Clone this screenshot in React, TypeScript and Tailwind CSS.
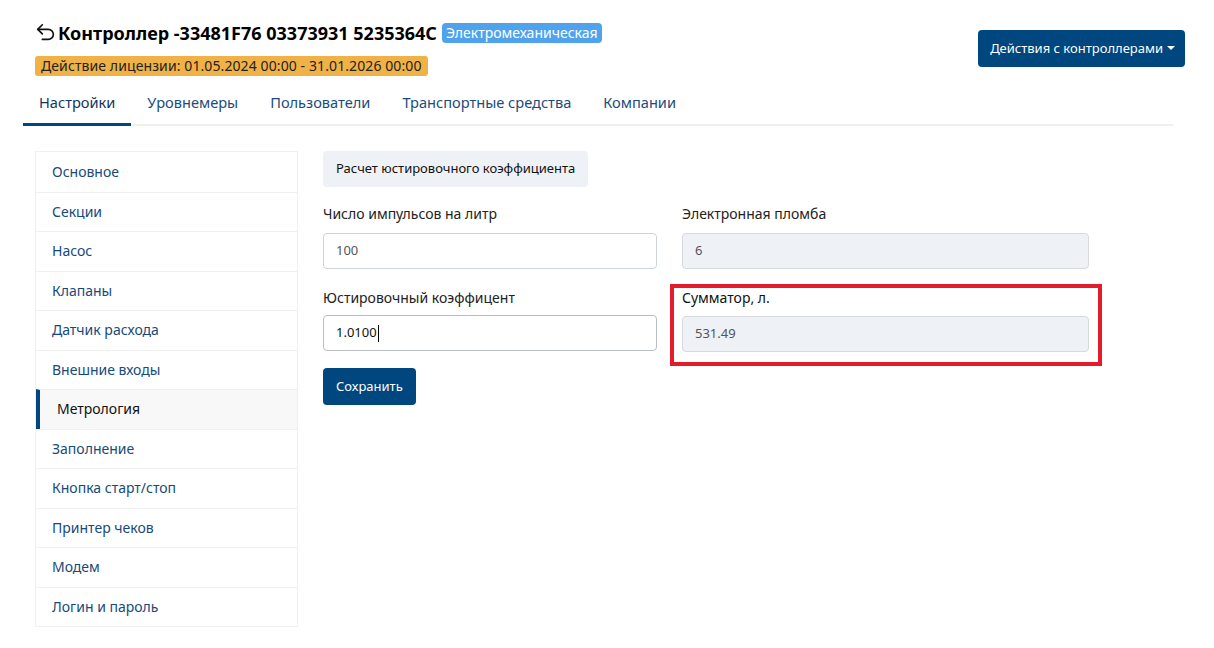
import React from "react";

const navItems = [
  "Основное",
  "Секции",
  "Насос",
  "Клапаны",
  "Датчик расхода",
  "Внешние входы",
  "Метрология",
  "Заполнение",
  "Кнопка старт/стоп",
  "Принтер чеков",
  "Модем",
  "Логин и пароль",
];

const tabs = ["Настройки", "Уровнемеры", "Пользователи", "Транспортные средства", "Компании"];

function BackIcon() {
  return (
    <svg width="22" height="22" viewBox="0 0 24 24" fill="none" stroke="#111" strokeWidth="1.8" strokeLinecap="round" strokeLinejoin="round">
      <path d="M8 13 3 8l5-5" />
      <path d="M3 8h11.5a5.5 5.5 0 0 1 0 11H8" />
    </svg>
  );
}

export default function App() {
  return (
    <div className="w-[1214px] h-[648px] bg-white text-[#212529] overflow-hidden" style={{ fontFamily: '"Noto Sans", "Open Sans", sans-serif' }}>
      {/* Header */}
      <div className="flex justify-between pl-[35px] pr-[29px] pt-[20px]">
        <div className="flex flex-col">
          <div className="flex items-center h-[26px]">
            <BackIcon />
            <span className="text-[18px] leading-[26px] font-bold text-black ml-[1px]">Контроллер -33481F76 03373931 5235364C</span>
            <span className="ml-[5px] bg-[#4fa3ec] text-white text-[14px] leading-[20px] px-[4px] rounded-[4px]">Электромеханическая</span>
          </div>
          <div className="mt-[10px] flex">
            <span className="bg-[#f0b247] text-[#222] text-[14px] leading-[20px] px-[6px] tracking-[0.1px] rounded-[3px]">Действие лицензии: 01.05.2024 00:00 - 31.01.2026 00:00</span>
          </div>
        </div>
        <div className="pt-[10px]">
          <button className="flex items-center bg-[#00467f] text-white text-[13px] h-[37px] pl-[12px] pr-[10px] rounded-[4px]">
            Действия с контроллерами
            <span className="ml-[4px] inline-block w-0 h-0 border-l-[4px] border-r-[4px] border-t-[4px] border-l-transparent border-r-transparent border-t-white mb-[2px]" />
          </button>
        </div>
      </div>

      {/* Tabs */}
      <div className="ml-[23px] mr-[41px] mt-[6px] flex border-b-[2px] border-[#f0f0f0]">
        {tabs.map((t, i) => (
          <div
            key={t}
            className={
              "text-[14.6px] px-[16px] h-[44px] flex items-center mb-[-2px] border-b-[3px] " +
              (i === 0 ? "text-[#12365c] border-[#00467f]" : "text-[#1b4c7c] border-transparent")
            }
          >
            {t}
          </div>
        ))}
      </div>

      {/* Body */}
      <div className="flex pl-[35px] pt-[25px]">
        <div className="w-[263px] flex flex-col border border-[#f0f0f0]">
          {navItems.map((n, i) => {
            const active = n === "Метрология";
            return (
              <div
                key={n}
                className={
                  "h-[39.5px] flex items-center text-[14px] pb-[1px] " +
                  (i > 0 ? "border-t border-[#f0f0f0] " : "") +
                  (active ? "bg-[#f8f8f8] border-l-[4px] border-l-[#00467f] pl-[17px] text-[#111]" : "pl-[16px] text-[#174a7c]")
                }
              >
                {n}
              </div>
            );
          })}
        </div>

        <div className="ml-[25px] flex flex-col">
          <div>
            <button className="bg-[#eef1f5] text-[13px] text-[#111] h-[36px] px-[13px] rounded-[4px]">Расчет юстировочного коэффициента</button>
          </div>

          <div className="flex mt-[17px] gap-[25px]">
            <div className="w-[334px] flex flex-col">
              <label className="text-[14px] text-[#222] leading-[20px]">Число импульсов на литр</label>
              <div className="mt-[9px] h-[36px] border border-[#cfd4da] rounded-[4px] flex items-center px-[12px] text-[13px] text-[#555]">100</div>
            </div>
            <div className="w-[407px] flex flex-col">
              <label className="text-[14px] text-[#222] leading-[20px]">Электронная пломба</label>
              <div className="mt-[9px] h-[36px] border border-[#d6dae0] bg-[#eef1f6] rounded-[4px] flex items-center px-[12px] text-[13px] text-[#555]">6</div>
            </div>
          </div>

          <div className="flex mt-[10px] gap-[25px] items-start">
            <div className="w-[334px] flex flex-col pt-[9px]">
              <label className="text-[14px] text-[#222] leading-[20px]">Юстировочный коэффицент</label>
              <div className="mt-[7px] h-[36px] border border-[#b9bec4] rounded-[4px] flex items-center px-[12px] text-[13px] text-[#111]">
                1.0100<span className="inline-block w-[1px] h-[17px] bg-black ml-[1px]" />
              </div>
              <div className="mt-[17px]">
                <button className="bg-[#00467f] text-white text-[13px] h-[37px] px-[13px] rounded-[4px]">Сохранить</button>
              </div>
            </div>
            <div className="w-[432px] -ml-[12px] mt-[5px] h-[82px] border-[4px] border-[#e31b2a] flex flex-col pl-[8px] pr-[9px] pt-[1px]">
              <label className="text-[14px] text-[#111] leading-[18px]">Сумматор, л.</label>
              <div className="mt-[9px] h-[36px] border border-[#d6dae0] bg-[#eef1f6] rounded-[4px] flex items-center px-[12px] text-[13px] text-[#555]">531.49</div>
            </div>
          </div>
        </div>
      </div>
    </div>
  );
}
